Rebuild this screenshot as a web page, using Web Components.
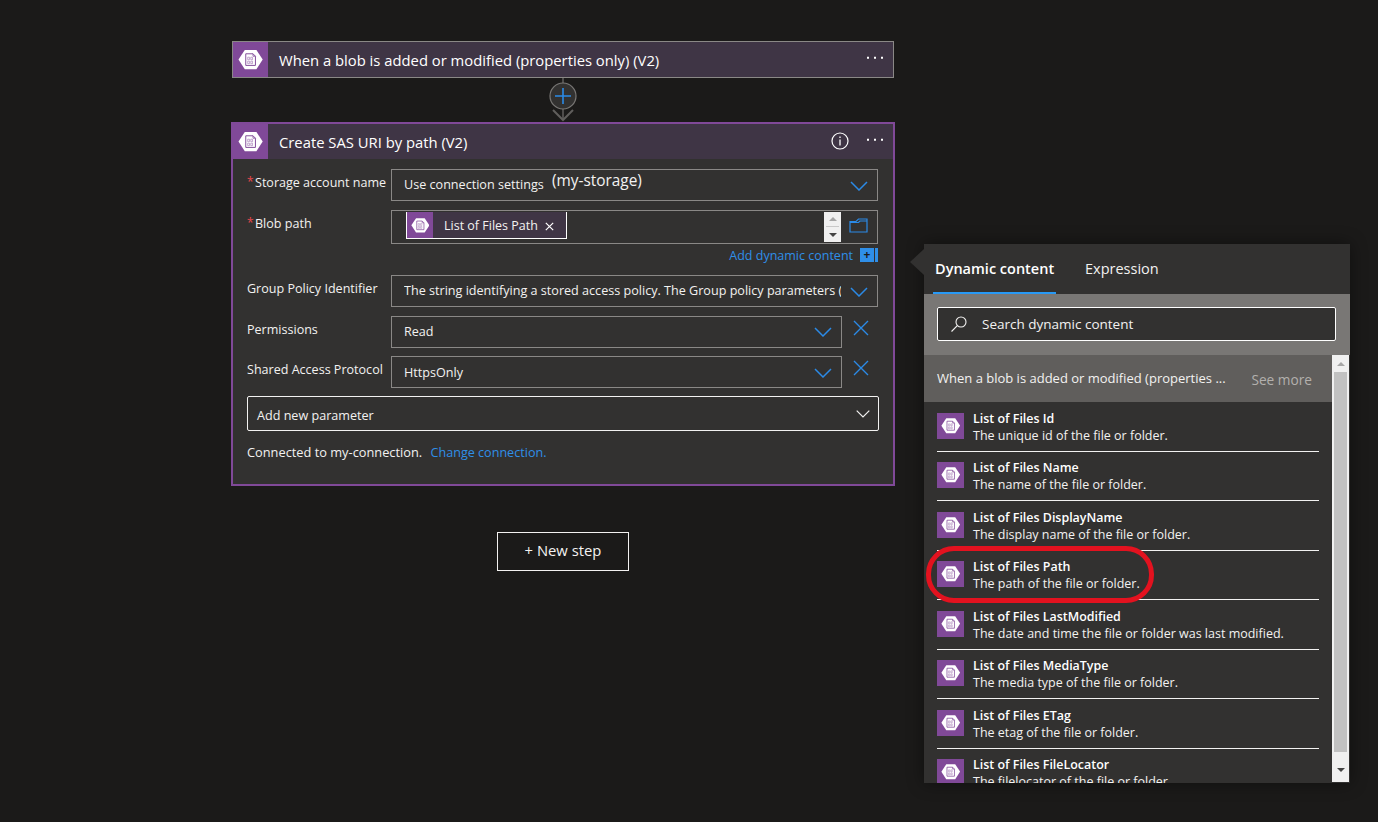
<!DOCTYPE html>
<html>
<head>
<meta charset="utf-8">
<title>Logic app designer</title>
<style>
html, body { margin: 0; height: 100%; background: #1b1a19; overflow: hidden; }
body { font-family: "Open Sans", "Liberation Sans", sans-serif; font-size: 13px; color: #f3f2f1; }
</style>
</head>
<body>
<designer-page></designer-page>

<script>
// hexagon storage icon used in headers, tokens and list rows
class OpIcon extends HTMLElement {
	connectedCallback() {
		const size = this.getAttribute('size') || 36;
		const h = this.getAttribute('height') || size;
		this.attachShadow({ mode: 'open' });
		this.shadowRoot.innerHTML = `
		<style>
			:host { display: flex; align-items: center; justify-content: center; flex: none; background: #804998; width: ${size}px; height: ${h}px; }
			svg { display: block; }
		</style>
		<svg width="${size * 0.72}" height="${size * 0.72}" viewBox="0 0 26 26">
			<path d="M7 3H19L25.5 13L19 23H7L.5 13Z" fill="#fff"/>
			<path d="M8 7H15.5L18 9.5V19H8Z" fill="none" stroke="#804998" stroke-width="1"/>
			<path d="M15.5 7V9.5H18" fill="none" stroke="#804998" stroke-width=".8"/>
			<path d="M10 10.5h1.8v2.6H10zM13.2 10.5H15v2.6h-1.8zM10 14.6h1.8v2.6H10zM13.2 14.6H15v2.6h-1.8z" fill="none" stroke="#a77fb8" stroke-width=".7"/>
		</svg>`;
	}
}
customElements.define('op-icon', OpIcon);

class FlowCard extends HTMLElement {
	connectedCallback() {
		const active = this.hasAttribute('active');
		this.attachShadow({ mode: 'open' });
		this.shadowRoot.innerHTML = `
		<style>
			:host { display: block; box-sizing: border-box; border: ${active ? '2px solid #804998' : '1px solid #8a8886'}; background: #323130; ${active ? 'margin: 0 -1px;' : ''} }
			#head { display: flex; align-items: center; height: 35px; background: #3f3545; font-size: 14.8px; color: #fff; }
			#title { margin-left: 11px; flex: 1; white-space: nowrap; }
			#info { margin: 0 17px 2px 0; display: block; }
			#dots { display: block; margin: 0 9px 3px 0; }
		</style>
		<div id="head">
			<op-icon size="35" height="35"></op-icon>
			<span id="title">${this.getAttribute('title')}</span>
			${active ? `<svg id="info" width="18" height="18" viewBox="0 0 18 18"><circle cx="9" cy="9" r="8" fill="none" stroke="#fff" stroke-width="1.2"/><path d="M9 7.5V13.5M9 4.5V6" stroke="#fff" stroke-width="1.3"/></svg>` : ''}
			<svg id="dots" width="18" height="4" viewBox="0 0 18 4"><path d="M1 .8h2v2H1zM8 .8h2v2H8zM15 .8h2v2h-2z" fill="#fff"/></svg>
		</div>
		<slot></slot>`;
	}
}
customElements.define('flow-card', FlowCard);

const chevron = `<svg width="18" height="10" viewBox="0 0 18 10"><path d="M1 1L9 9L17 1" fill="none" stroke="#2b8ae6" stroke-width="1.5"/></svg>`;

// one label + dropdown line of the form
class FormRow extends HTMLElement {
	connectedCallback() {
		const req = this.hasAttribute('required');
		const clear = this.hasAttribute('clear');
		this.attachShadow({ mode: 'open' });
		this.shadowRoot.innerHTML = `
		<style>
			:host { display: flex; margin-bottom: 8px; position: relative; }
			#label { width: 144px; flex: none; box-sizing: border-box; padding-top: 6px; font-size: 12.55px; line-height: 16px; white-space: nowrap; position: relative; }
			#star { position: absolute; left: 0; top: 5px; color: #e8484d; font-size: 12px; }
			#req { padding-left: 8px; }
			#box { flex: 1; min-width: 0; height: 32px; box-sizing: border-box; border: 1px solid #8a8886; display: flex; align-items: center; padding: 0 9px 0 12px; font-size: 12.6px; overflow: hidden; }
			#text { flex: 1; min-width: 0; white-space: nowrap; overflow: hidden; color: #f3f2f1; margin-top: -2px; }
			:host([low]) #text { margin-top: 0; }
			#chev { display: block; margin: 2px 0 0 9px; flex: none; }
			:host([clear]:not([low])) #chev { margin-top: 0; }
			#chev svg { display: block; }
			#x { flex: none; width: 34px; display: flex; justify-content: center; padding-top: 4px; box-sizing: border-box; height: 20px; margin-left: 2px; }
		</style>
		<div id="label">${req ? `<span id="star">*</span><span id="req">${this.getAttribute('label')}</span>` : this.getAttribute('label')}</div>
		<div id="box"><span id="text"><slot></slot></span><span id="chev">${chevron}</span></div>
		${clear ? `<div id="x"><svg width="16" height="16" viewBox="0 0 16 16"><path d="M1 1L15 15M15 1L1 15" stroke="#2b8ae6" stroke-width="1.4"/></svg></div>` : ''}`;
	}
}
customElements.define('form-row', FormRow);

// blob path line, with the token and the little spin buttons
class BlobPathRow extends HTMLElement {
	connectedCallback() {
		this.attachShadow({ mode: 'open' });
		this.shadowRoot.innerHTML = `
		<style>
			:host { display: block; }
			#row { display: flex; }
			#label { width: 144px; flex: none; padding-top: 6px; font-size: 12.55px; line-height: 16px; position: relative; box-sizing: border-box; }
			#star { position: absolute; left: 0; top: 5px; color: #e8484d; font-size: 12px; }
			#label span + span { padding-left: 8px; }
			#box { flex: 1; height: 34px; box-sizing: border-box; border: 1px solid #8a8886; display: flex; padding: 1px 9px 0 14px; }
			#token { display: flex; align-items: center; height: 27px; box-sizing: border-box; border: 1px solid #fff; border-top: 0; background: #3f3545; font-size: 12.5px; width: 161px; }
			#token span { margin-left: 11px; flex: 1; white-space: nowrap; }
			#token svg { margin: 2px 12px 0 0; }
			#spin { margin-left: auto; width: 17px; height: 30px; background: #f0f0f0; display: flex; flex-direction: column; align-items: center; justify-content: space-around; padding: 2px 0; box-sizing: border-box; }
			#spin i { display: block; width: 0; height: 0; border: 4px solid transparent; }
			#up { border-bottom: 4px solid #a6a6a6 !important; border-top: 0 !important; }
			#rule { width: 13px; height: 1px; background: #c8c8c8; }
			#down { border-top: 4px solid #444 !important; border-bottom: 0 !important; }
			#folder { margin: 6px 0 0 8px; display: block; }
			#dyn { display: flex; justify-content: flex-end; align-items: center; height: 14px; margin-top: 4px; color: #2f8fe8; font-size: 12.5px; white-space: nowrap; }
			#plus { width: 14px; height: 14px; margin-left: 7px; background: #2f8fe8; color: #1b1a19; font-size: 12px; line-height: 14px; text-align: center; font-weight: 700; }
			#stripe { width: 3px; height: 14px; margin-left: 1px; background: #2f8fe8; }
		</style>
		<div id="row">
			<div id="label"><span id="star">*</span><span>Blob path</span></div>
			<div id="box">
				<div id="token">
					<op-icon size="26" height="26"></op-icon>
					<span>List of Files Path</span>
					<svg width="9" height="9" viewBox="0 0 9 9"><path d="M.8 .8L8.2 8.2M8.2 .8L.8 8.2" stroke="#fff" stroke-width="1.2"/></svg>
				</div>
				<div id="spin"><i id="up"></i><div id="rule"></div><i id="down"></i></div>
				<svg id="folder" width="19" height="15" viewBox="0 0 19 15"><path d="M1 3.5H7L9.5 1H18V14H1Z M1 4.5H9.5L11 3H18" fill="none" stroke="#2b8ae6" stroke-width="1.2"/></svg>
			</div>
		</div>
		<div id="dyn">Add dynamic content<div id="plus">+</div><div id="stripe"></div></div>`;
	}
}
customElements.define('blob-path-row', BlobPathRow);

class DynRow extends HTMLElement {
	connectedCallback() {
		this.attachShadow({ mode: 'open' });
		this.shadowRoot.innerHTML = `
		<style>
			:host { flex: none; height: 49.5px; box-sizing: border-box; margin: 0 13px; border-bottom: 1px solid #f3f2f1; display: flex; gap: 9px; padding-top: 7.5px; }
			:host([last]) { border-bottom: 0; }
			#t { font-size: 12.45px; font-weight: 600; line-height: 16px; margin-top: 1px; white-space: nowrap; color: #fff; }
			#d { font-size: 12.5px; line-height: 17px; white-space: nowrap; }
			op-icon { margin-top: 3px; }
		</style>
		<op-icon size="27" height="26"></op-icon>
		<div><div id="t">${this.getAttribute('name')}</div><div id="d">${this.getAttribute('desc')}</div></div>`;
	}
}
customElements.define('dyn-row', DynRow);

class DynPanel extends HTMLElement {
	connectedCallback() {
		this.attachShadow({ mode: 'open' });
		this.shadowRoot.innerHTML = `
		<style>
			:host { display: block; position: absolute; left: 924px; top: 244px; width: 426px; height: 539px; background: #323130; box-shadow: 0 0 16px rgba(0,0,0,.45); }
			#arrow { position: absolute; left: -14px; top: 5px; width: 0; height: 0; border: 13px solid transparent; border-left: 0; border-right: 14px solid #323130; }
			#tabs { display: flex; height: 50px; box-sizing: border-box; padding: 0 9px; gap: 27px; font-size: 14.5px; }
			.tab { padding: 0 2px; line-height: 50px; box-sizing: border-box; height: 50px; }
			.on { font-weight: 600; border-bottom: 2px solid #2899f5; width: 123px; color: #fff; white-space: nowrap; }
			#search { height: 61px; background: #797775; box-sizing: border-box; padding: 13px 14px 14px 13px; }
			#input { height: 34px; box-sizing: border-box; border: 1px solid #fff; border-radius: 2px; background: #323130; display: flex; align-items: center; gap: 14px; padding-left: 12px; font-size: 13.5px; }
			#body { display: flex; height: 428px; overflow: hidden; }
			#list { flex: none; width: 408px; display: flex; flex-direction: column; overflow: hidden; }
			#group { flex: none; height: 47px; background: #605e5c; display: flex; align-items: center; padding: 0 20px 2px 13px; box-sizing: border-box; font-size: 13px; white-space: nowrap; justify-content: space-between; }
			#more { color: #b3b0ad; font-size: 13.7px; margin-top: 3px; }
			#bar { width: 17px; flex: none; height: 427px; background: #f0f0f0; display: flex; flex-direction: column; align-items: center; }
			#bar i { display: block; width: 0; height: 0; border: 4px solid transparent; }
			#bar i.u { border-top: 0; border-bottom: 4px solid #a6a6a6; margin-top: 7px; }
			#thumb { width: 13px; height: 380px; background: #c1c1c1; margin-top: 6px; }
			#bar i.d { border-bottom: 0; border-top: 4px solid #444; margin-top: 16px; }
		</style>
		<div id="arrow"></div>
		<div id="tabs"><div class="tab on">Dynamic content</div><div class="tab">Expression</div></div>
		<div id="search"><div id="input">
			<svg width="18" height="18" viewBox="0 0 18 18"><circle cx="11" cy="7" r="5" fill="none" stroke="#f3f2f1" stroke-width="1.1"/><path d="M7.3 10.7L1.5 16.5" stroke="#f3f2f1" stroke-width="1.1"/></svg>
			Search dynamic content
		</div></div>
		<div id="body">
			<div id="list">
				<div id="group"><span>When a blob is added or modified (properties ...</span><span id="more">See more</span></div>
				<slot></slot>
			</div>
			<div id="bar"><i class="u"></i><div id="thumb"></div><i class="d"></i></div>
		</div>`;
	}
}
customElements.define('dyn-panel', DynPanel);

class DesignerPage extends HTMLElement {
	connectedCallback() {
		this.attachShadow({ mode: 'open' });
		this.shadowRoot.innerHTML = `
		<style>
			:host { display: block; position: relative; height: 822px; overflow: hidden; padding: 41px 0 0 232px; box-sizing: border-box; background: #1b1a19; }
			#col { width: 662px; }
			flow-card[first] { height: 37px; }
			#link { height: 44px; display: flex; justify-content: center; }
			#link svg { display: block; }
			#form { padding: 10px 15px 0 14px; height: 325px; box-sizing: border-box; position: relative; }
			#over { position: absolute; left: 319px; top: 13px; font-size: 15.4px; line-height: 18px; color: #f3f2f1; }
			#add { height: 35px; box-sizing: border-box; border: 1px solid #f3f2f1; border-radius: 2px; display: flex; align-items: center; justify-content: space-between; padding: 4px 8px 0 9px; font-size: 12.6px; margin-right: -1px; margin-top: 8px; }
			#add svg { margin-bottom: 4px; }
			#conn { margin-top: 13px; font-size: 12.8px; line-height: 17px; white-space: nowrap; }
			#conn a { color: #2f8fe8; margin-left: 5px; font-size: 12.6px; }
			form-row.g { margin-bottom: 9px; }
			form-row.first { margin-bottom: 9px; }
			#step { margin: 46px auto 0; width: 132px; height: 39px; box-sizing: border-box; border: 1px solid #f3f2f1; display: flex; align-items: center; justify-content: center; padding-bottom: 3px; font-size: 14.8px; color: #f3f2f1; }
			#mark { position: absolute; left: 926px; top: 546px; width: 228px; height: 57px; box-sizing: border-box; border: 5px solid #e3121f; border-radius: 28px; }
		</style>
		<div id="col">
			<flow-card first title="When a blob is added or modified (properties only) (V2)"></flow-card>
			<div id="link">
				<svg width="30" height="44" viewBox="0 0 30 44">
					<path d="M15 0V41" stroke="#605e5c" stroke-width="1.5"/>
					<circle cx="15" cy="18" r="13" fill="#323130" stroke="#797775" stroke-width="1.2"/>
					<path d="M15 10V26M7 18H23" stroke="#2b8ae6" stroke-width="1.6"/>
					<path d="M5 32L15 42L25 32" fill="none" stroke="#605e5c" stroke-width="2"/>
				</svg>
			</div>
			<flow-card active title="Create SAS URI by path (V2)">
				<div id="form">
					<form-row class="first" required label="Storage account name">Use connection settings</form-row>
					<span id="over">(my-storage)</span>
					<blob-path-row></blob-path-row>
					<div style="height:13px"></div>
					<form-row class="g" label="Group Policy Identifier">The string identifying a stored access policy. The Group policy parameters (e.g. start time)</form-row>
					<form-row clear label="Permissions">Read</form-row>
					<form-row clear low label="Shared Access Protocol">HttpsOnly</form-row>
					<div id="add">Add new parameter <svg width="14" height="8" viewBox="0 0 14 8"><path d="M.7 .7L7 7L13.3 .7" fill="none" stroke="#f3f2f1" stroke-width="1.2"/></svg></div>
					<div id="conn">Connected to my-connection. <a>Change connection.</a></div>
				</div>
			</flow-card>
			<div id="step">+ New step</div>
		</div>
		<dyn-panel>
			<dyn-row name="List of Files Id" desc="The unique id of the file or folder."></dyn-row>
			<dyn-row name="List of Files Name" desc="The name of the file or folder."></dyn-row>
			<dyn-row name="List of Files DisplayName" desc="The display name of the file or folder."></dyn-row>
			<dyn-row name="List of Files Path" desc="The path of the file or folder."></dyn-row>
			<dyn-row name="List of Files LastModified" desc="The date and time the file or folder was last modified."></dyn-row>
			<dyn-row name="List of Files MediaType" desc="The media type of the file or folder."></dyn-row>
			<dyn-row name="List of Files ETag" desc="The etag of the file or folder."></dyn-row>
			<dyn-row last name="List of Files FileLocator" desc="The filelocator of the file or folder."></dyn-row>
		</dyn-panel>
		<div id="mark"></div>`;
	}
}
customElements.define('designer-page', DesignerPage);
</script>
</body>
</html>
